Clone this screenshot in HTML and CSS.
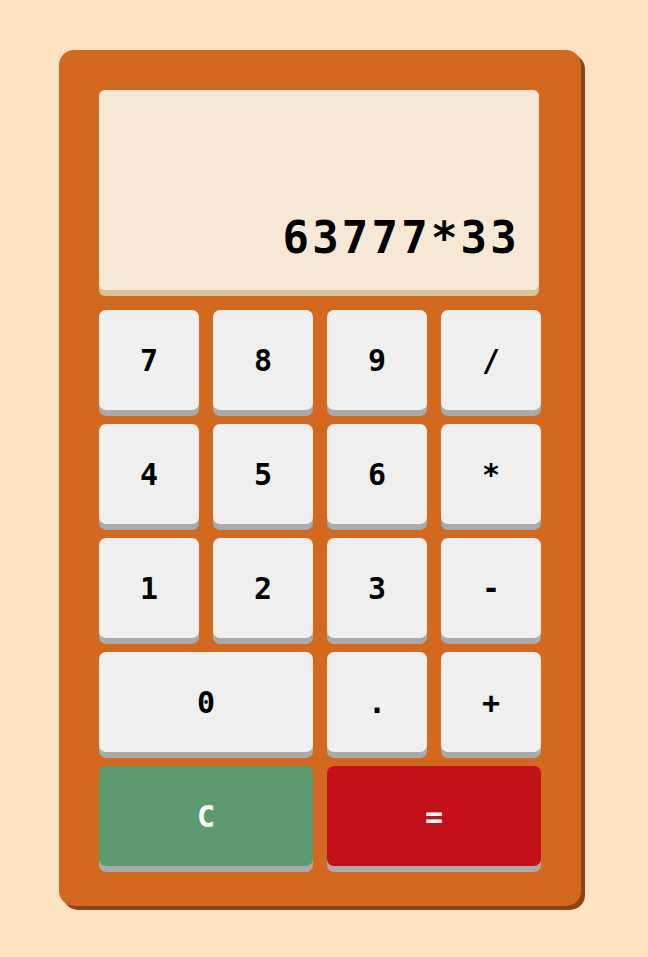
FILE: index.html
```html
<!DOCTYPE html>
<html lang="en">
<head>
<meta charset="utf-8">
<title>Calculator</title>
<link rel="stylesheet" href="styles.css">
</head>
<body>
<div class="calc">
  <div class="display"><span class="value">63777*33</span></div>
  <div class="keys">
    <button class="key">7</button>
    <button class="key">8</button>
    <button class="key">9</button>
    <button class="key">/</button>
    <button class="key">4</button>
    <button class="key">5</button>
    <button class="key">6</button>
    <button class="key">*</button>
    <button class="key">1</button>
    <button class="key">2</button>
    <button class="key">3</button>
    <button class="key">-</button>
    <button class="key wide">0</button>
    <button class="key">.</button>
    <button class="key">+</button>
    <button class="key wide clear">C</button>
    <button class="key wide equals">=</button>
  </div>
</div>
</body>
</html>
```

FILE: styles.css
```css
html, body {
  margin: 0;
  padding: 0;
}
body {
  background: #FFE4C4;
  width: 648px;
  height: 957px;
  font-family: "DejaVu Sans Mono", monospace;
}
.calc {
  position: relative;
  margin: 50px 0 0 59px;
  width: 442px;
  padding: 40px;
  background: #D2691E;
  border-radius: 15px;
  box-shadow: 4px 4px 0 #8B4513;
}
.display {
  width: 440px;
  height: 200px;
  box-sizing: border-box;
  background: #F5E9D5;
  border-radius: 6px;
  box-shadow: 0 6px 0 #D6C39C;
  display: flex;
  justify-content: flex-end;
  align-items: flex-end;
  padding: 0 20px 30px 20px;
  margin-bottom: 20px;
}
.value {
  font-size: 44px;
  font-weight: bold;
  color: #000;
  line-height: 1;
  letter-spacing: 3.2px;
  margin-right: -1px;
}
.keys {
  display: grid;
  grid-template-columns: repeat(4, 100px);
  grid-auto-rows: 100px;
  gap: 14px;
}
.key {
  border: none;
  margin: 0;
  padding: 0;
  background: #EFEFEF;
  border-radius: 7px;
  box-shadow: 0 6px 0 #AAAAAA;
  font-family: "DejaVu Sans Mono", monospace;
  font-size: 30px;
  font-weight: bold;
  color: #000;
}
.wide {
  grid-column: span 2;
}
.clear {
  background: #5E9A70;
  color: #fff;
}
.equals {
  background: #C41019;
  color: #fff;
}
```
